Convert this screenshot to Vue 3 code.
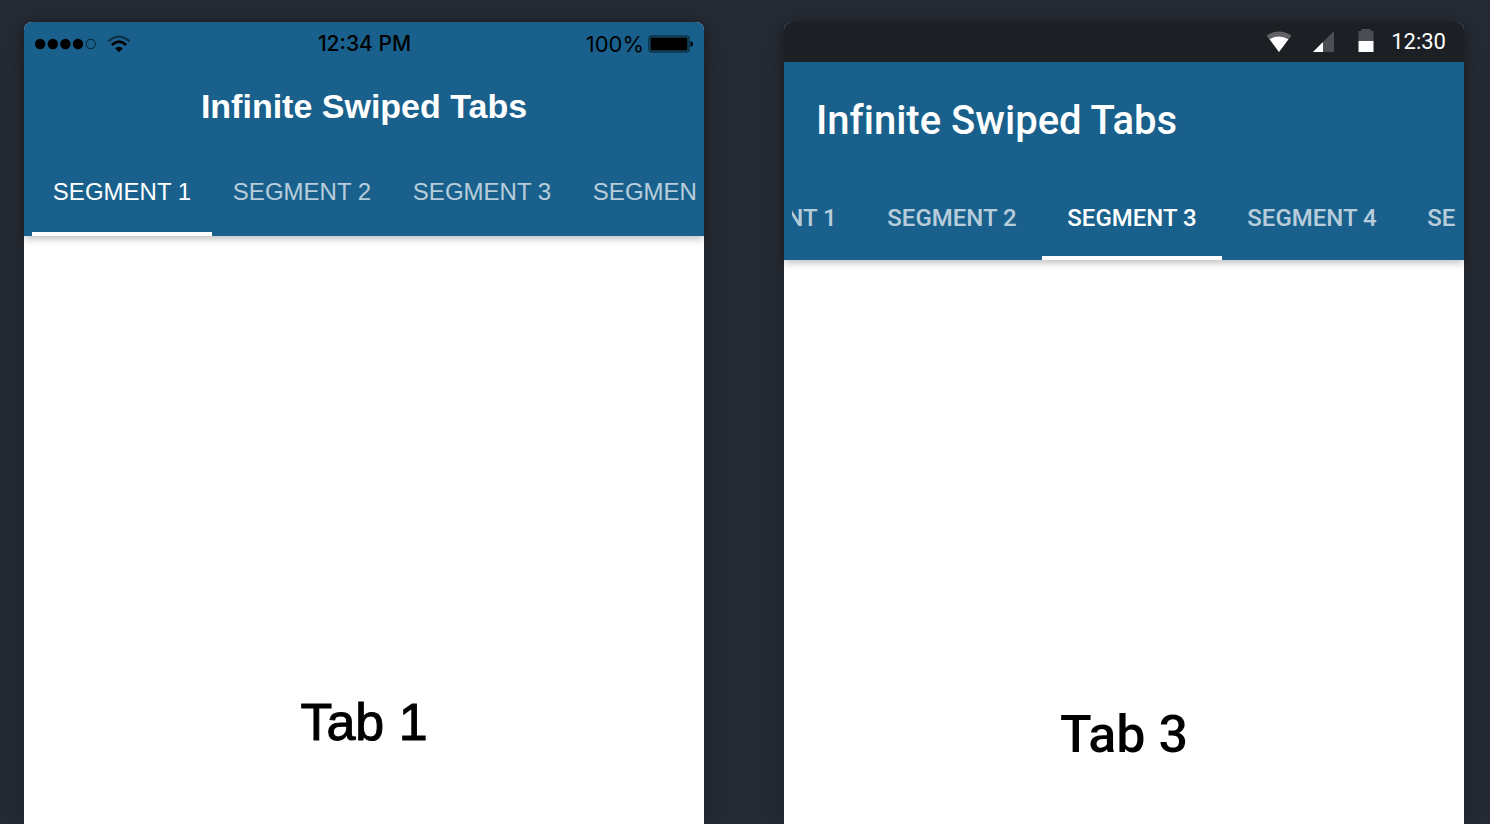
<script setup>
import { onMounted, ref } from 'vue'

const segments = [1, 2, 3, 4, 5]
const iosTab = ref(1)
const androidTab = ref(3)
const iosBar = ref(null)
const androidBar = ref(null)

function select(tab, bar, n) {
  tab.value = n
  centre(bar, n)
}

// Scrolls a segment bar so that the chosen segment sits mid-screen.
function centre(bar, n) {
  const button = bar.children[n - 1]
  const screen = bar.parentElement.clientWidth
  bar.scrollLeft = (n - 1) * button.offsetWidth - (screen - button.offsetWidth) / 2
}

const selectIos = (n) => select(iosTab, iosBar.value, n)
const selectAndroid = (n) => select(androidTab, androidBar.value, n)

onMounted(() => {
  centre(iosBar.value, iosTab.value)
  centre(androidBar.value, androidTab.value)
})
</script>

<template>
  <main class="stage">
    <section class="phone ios" aria-label="iOS preview">
      <header class="header">
        <div class="status">
          <div class="status-left">
            <svg width="62" height="12" viewBox="0 0 62 12" aria-hidden="true">
              <circle cx="5.2" cy="6" r="5.2" />
              <circle cx="17.8" cy="6" r="5.2" />
              <circle cx="30.4" cy="6" r="5.2" />
              <circle cx="43" cy="6" r="5.2" />
              <circle cx="55.7" cy="6" r="4.7" fill="none" stroke="#000" stroke-opacity=".65" />
            </svg>
            <svg width="24" height="18" viewBox="0 0 24 18" aria-hidden="true">
              <path d="M1.4 6.4Q12 -3 22.6 6.4" fill="none" stroke="#000" stroke-opacity=".5" stroke-width="2.2" />
              <path d="M4.8 10Q12 3.4 19.2 10" fill="none" stroke="#000" stroke-width="2.6" />
              <path d="M8.2 13.3Q12 10.2 15.8 13.3L12 17.2Z" />
            </svg>
          </div>
          <time class="clock">12:34 PM</time>
          <div class="status-right">
            <span>100%</span>
            <svg width="46" height="18" viewBox="0 0 46 18" aria-hidden="true">
              <rect x="1" y="1" width="40" height="16" rx="2" fill="none" stroke="#000" stroke-opacity=".75" />
              <rect x="2.5" y="2.5" width="37" height="13" rx="1" />
              <path d="M42.5 6Q45 6.6 45 9T42.5 12Z" />
            </svg>
          </div>
        </div>
        <h1 class="title">Infinite Swiped Tabs</h1>
        <nav ref="iosBar" class="segments">
          <button
            v-for="n in segments"
            :key="n"
            type="button"
            class="segment"
            :class="{ active: n === iosTab }"
            @click="selectIos(n)"
          >SEGMENT {{ n }}</button>
        </nav>
      </header>
      <div class="content"><h2>Tab {{ iosTab }}</h2></div>
    </section>

    <section class="phone android" aria-label="Android preview">
      <header class="header">
        <div class="status">
          <svg width="26" height="22" viewBox="0 0 26 22" aria-hidden="true">
            <path d="M.5 4.4Q13 -3.4 25.5 4.4L13 21Z" fill="#606266" />
            <path d="M3.6 8.2Q13 2.8 22.4 8.2L13 21Z" fill="#fff" />
          </svg>
          <svg class="signal" width="22" height="22" viewBox="0 0 22 22" aria-hidden="true">
            <path d="M22 0V21H1Z" fill="#4b4e52" />
            <path d="M11 11V21H1Z" fill="#fff" />
          </svg>
          <svg class="battery" width="16" height="24" viewBox="0 0 16 24" aria-hidden="true">
            <path d="M.5 2H3.5V0H12.5V2H15.5V12H.5Z" fill="#4b4e52" />
            <path d="M.5 12H15.5V23H.5Z" fill="#fff" />
          </svg>
          <time>12:30</time>
        </div>
        <h1 class="title">Infinite Swiped Tabs</h1>
        <nav ref="androidBar" class="segments">
          <button
            v-for="n in segments"
            :key="n"
            type="button"
            class="segment"
            :class="{ active: n === androidTab }"
            @click="selectAndroid(n)"
          >SEGMENT {{ n }}</button>
        </nav>
      </header>
      <div class="content"><h2>Tab {{ androidTab }}</h2></div>
    </section>
  </main>
</template>

<style>
body {
  margin: 0;
  background: #252a33;
}
</style>

<style scoped>
.stage {
  box-sizing: border-box;
  display: grid;
  grid-template-columns: 1fr 1fr;
  gap: 80px;
  height: 100vh;
  padding: 22px 26px 0 24px;
  overflow: hidden;
}

.phone {
  display: flex;
  flex-direction: column;
  min-width: 0;
  border-radius: 8px 8px 0 0;
  background: #fff;
  box-shadow: 0 8px 40px rgba(0, 0, 0, 0.16);
}

.ios {
  font-family: "Liberation Sans", Arial, sans-serif;
}

.android {
  font-family: Roboto, sans-serif;
  font-variant-ligatures: none;
}

.header {
  border-radius: 8px 8px 0 0;
  background: #19618c;
  color: #fff;
  box-shadow: 0 2px 8px rgba(0, 0, 0, 0.3);
}

.status {
  box-sizing: border-box;
  display: flex;
  align-items: center;
  height: 40px;
  font-size: 22px;
  line-height: 24px;
}

.status svg {
  flex: none;
}

.ios .status {
  display: grid;
  grid-template-columns: 1fr auto 1fr;
  padding: 4px 10px 0 11px;
  color: #000;
  font-family: Inter, sans-serif;
}

.status-left,
.status-right {
  display: flex;
  align-items: center;
  gap: 10px;
}

.status-right {
  justify-content: flex-end;
  gap: 4px;
}

.clock {
  font-size: 21px;
  font-weight: 500;
}

.android .status {
  justify-content: flex-end;
  padding: 0 18px;
  border-radius: 8px 8px 0 0;
  background: #1c1f24;
}

.signal {
  margin: 0 24px 0 20px;
}

.battery {
  margin: 0 17px 2px 0;
}

.title {
  margin: 0;
  font-size: 34px;
  font-weight: 700;
  line-height: 88px;
  text-align: center;
}

.android .title {
  padding-left: 32px;
  font-size: 40px;
  font-weight: 500;
  line-height: 118px;
  text-align: left;
}

.segments {
  display: flex;
  margin: 0 8px;
  overflow: hidden;
}

.segment {
  box-sizing: border-box;
  flex: none;
  width: 180px;
  height: 86px;
  padding: 2px 0 0;
  border: 0;
  border-bottom: 4px solid transparent;
  background: none;
  color: rgba(255, 255, 255, 0.7);
  font-family: inherit;
  font-size: 24px;
  font-weight: 500;
  cursor: pointer;
}

.android .segment {
  height: 80px;
  padding: 0;
}

.segment.active {
  border-bottom-color: #fff;
  color: #fff;
}

.content {
  flex: 1;
  padding-top: 456px;
  color: #000;
  text-align: center;
}

.android .content {
  padding-top: 445px;
}

h2 {
  margin: 0;
  font-size: 52px;
  font-weight: 500;
  line-height: 60px;
}

.ios h2 {
  -webkit-text-stroke: 1px #000;
}
</style>
